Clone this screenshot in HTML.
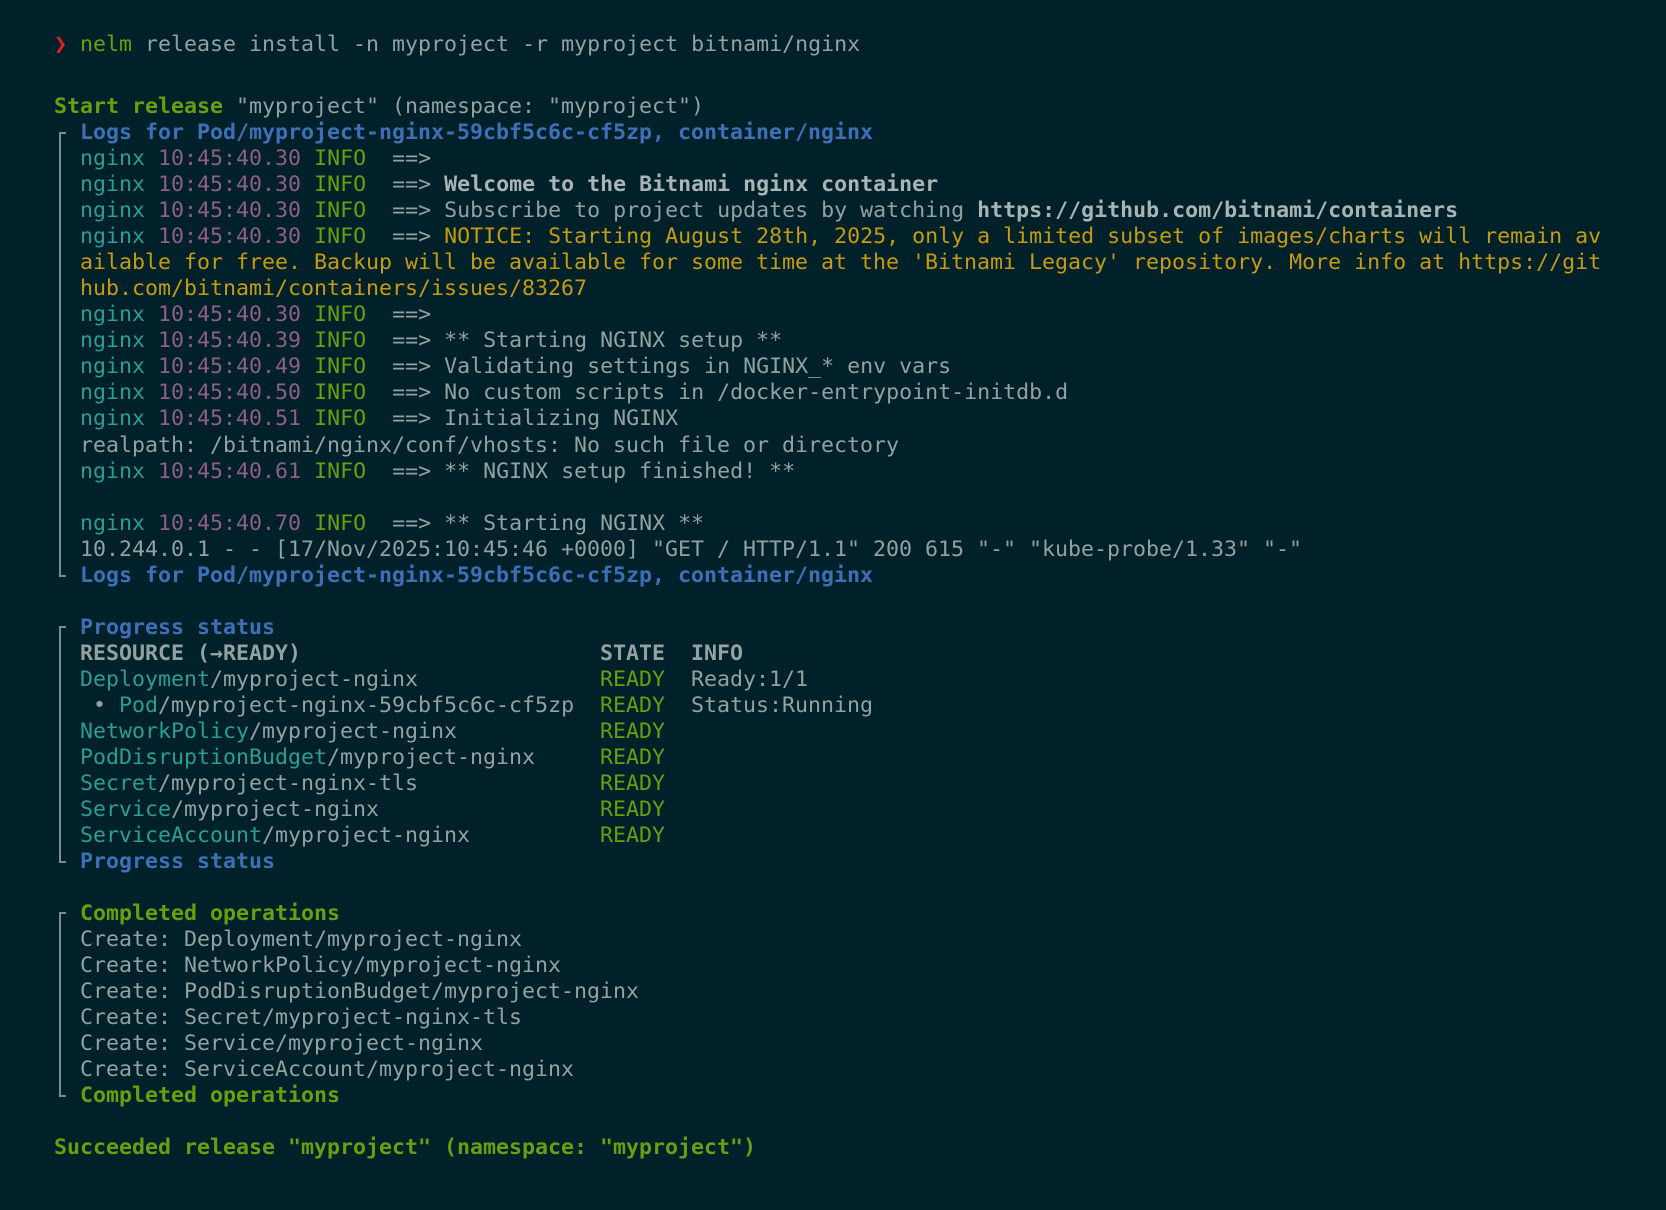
<!DOCTYPE html>
<html><head><meta charset="utf-8"><style>
html,body{margin:0;padding:0;background:#00202a;width:1666px;height:1210px;overflow:hidden;position:relative}
pre{margin:0;position:absolute;left:54px;font-family:"DejaVu Sans Mono","Liberation Mono",monospace;font-size:21.6px;line-height:26.01px;color:#93a1a1;white-space:pre}
.g{color:#6a9e0f}.b{color:#3e70b8}.c{color:#2a9d94}.m{color:#8f5e8a}.y{color:#c59b12}.r{color:#e8201f}.w{color:#a9b5b5}
.bd{font-weight:bold}
.col{display:inline-block;width:40ch}
.v{position:absolute;left:59px;width:2px;background:#7a8c8e}
.h{position:absolute;left:59px;width:7px;height:2px;background:#7a8c8e}
</style></head><body>
<pre style="top:32px"><span class="r">❯</span> <span class="g">nelm</span> release install -n myproject -r myproject bitnami/nginx</pre>
<pre style="top:94.3px"><span class="g bd">Start release</span> "myproject" (namespace: "myproject")
  <span class="b bd">Logs for Pod/myproject-nginx-59cbf5c6c-cf5zp, container/nginx</span>
  <span class="c">nginx</span> <span class="m">10:45:40.30</span> <span class="g">INFO</span>  ==>
  <span class="c">nginx</span> <span class="m">10:45:40.30</span> <span class="g">INFO</span>  ==> <b class="w">Welcome to the Bitnami nginx container</b>
  <span class="c">nginx</span> <span class="m">10:45:40.30</span> <span class="g">INFO</span>  ==> Subscribe to project updates by watching <b class="w">https://github.com/bitnami/containers</b>
  <span class="c">nginx</span> <span class="m">10:45:40.30</span> <span class="g">INFO</span>  ==> <span class="y">NOTICE: Starting August 28th, 2025, only a limited subset of images/charts will remain av</span>
  <span class="y">ailable for free. Backup will be available for some time at the 'Bitnami Legacy' repository. More info at https://git</span>
  <span class="y">hub.com/bitnami/containers/issues/83267</span>
  <span class="c">nginx</span> <span class="m">10:45:40.30</span> <span class="g">INFO</span>  ==>
  <span class="c">nginx</span> <span class="m">10:45:40.39</span> <span class="g">INFO</span>  ==> ** Starting NGINX setup **
  <span class="c">nginx</span> <span class="m">10:45:40.49</span> <span class="g">INFO</span>  ==> Validating settings in NGINX_* env vars
  <span class="c">nginx</span> <span class="m">10:45:40.50</span> <span class="g">INFO</span>  ==> No custom scripts in /docker-entrypoint-initdb.d
  <span class="c">nginx</span> <span class="m">10:45:40.51</span> <span class="g">INFO</span>  ==> Initializing NGINX
  realpath: /bitnami/nginx/conf/vhosts: No such file or directory
  <span class="c">nginx</span> <span class="m">10:45:40.61</span> <span class="g">INFO</span>  ==> ** NGINX setup finished! **

  <span class="c">nginx</span> <span class="m">10:45:40.70</span> <span class="g">INFO</span>  ==> ** Starting NGINX **
  10.244.0.1 - - [17/Nov/2025:10:45:46 +0000] "GET / HTTP/1.1" 200 615 "-" "kube-probe/1.33" "-"
  <span class="b bd">Logs for Pod/myproject-nginx-59cbf5c6c-cf5zp, container/nginx</span>

  <span class="b bd">Progress status</span>
  <b class="col">RESOURCE (→READY)</b><b>STATE  INFO</b>
  <span class="col"><span class="c">Deployment</span>/myproject-nginx</span><span class="g">READY</span>  Ready:1/1
  <span class="col"> • <span class="c">Pod</span>/myproject-nginx-59cbf5c6c-cf5zp</span><span class="g">READY</span>  Status:Running
  <span class="col"><span class="c">NetworkPolicy</span>/myproject-nginx</span><span class="g">READY</span>
  <span class="col"><span class="c">PodDisruptionBudget</span>/myproject-nginx</span><span class="g">READY</span>
  <span class="col"><span class="c">Secret</span>/myproject-nginx-tls</span><span class="g">READY</span>
  <span class="col"><span class="c">Service</span>/myproject-nginx</span><span class="g">READY</span>
  <span class="col"><span class="c">ServiceAccount</span>/myproject-nginx</span><span class="g">READY</span>
  <span class="b bd">Progress status</span>

  <span class="g bd">Completed operations</span>
  Create: Deployment/myproject-nginx
  Create: NetworkPolicy/myproject-nginx
  Create: PodDisruptionBudget/myproject-nginx
  Create: Secret/myproject-nginx-tls
  Create: Service/myproject-nginx
  Create: ServiceAccount/myproject-nginx
  <span class="g bd">Completed operations</span>

<span class="g bd">Succeeded release "myproject" (namespace: "myproject")</span></pre>
<div class="h" style="top:132px"></div><div class="v" style="top:132px;height:445px"></div><div class="h" style="top:575px"></div>
<div class="h" style="top:626px"></div><div class="v" style="top:626px;height:237px"></div><div class="h" style="top:861px"></div>
<div class="h" style="top:912px"></div><div class="v" style="top:912px;height:185px"></div><div class="h" style="top:1095px"></div>
</body></html>
